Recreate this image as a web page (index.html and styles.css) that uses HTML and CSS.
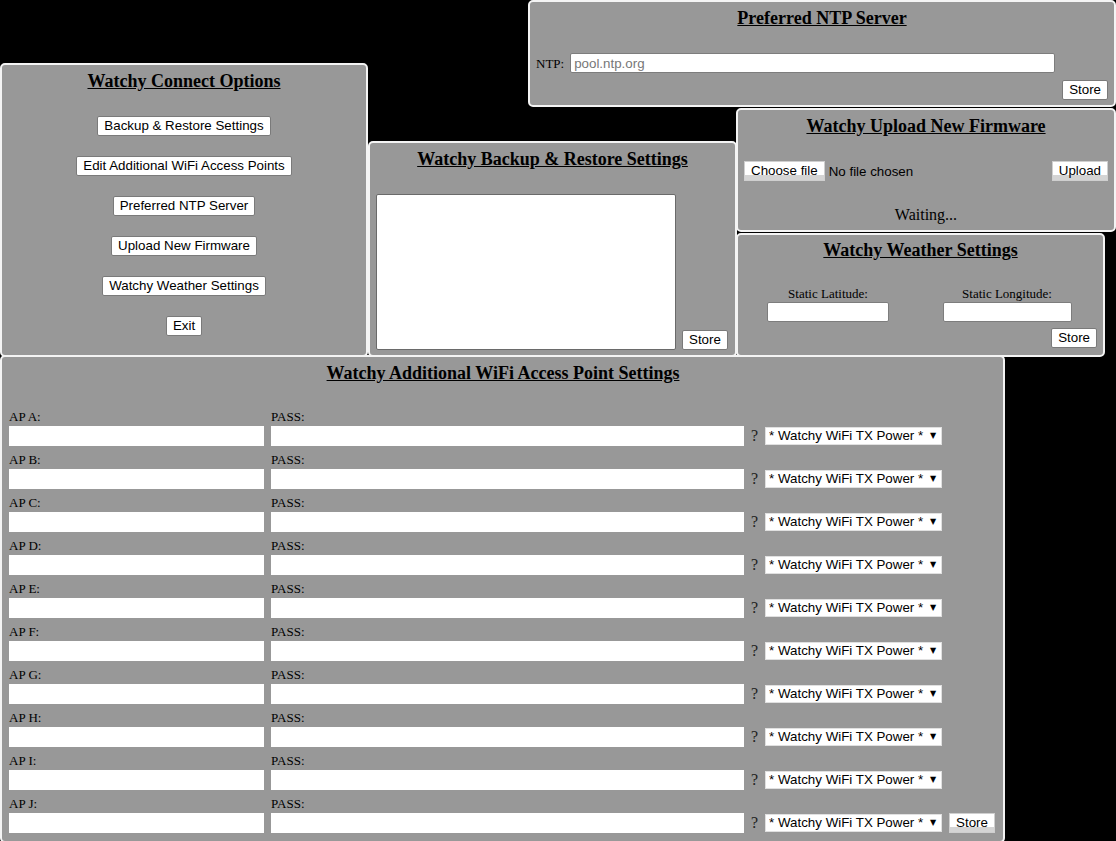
FILE: index.html
```html
<!DOCTYPE html>
<html lang="en">
<head>
<meta charset="utf-8">
<title>Watchy Connect</title>
<link rel="stylesheet" href="styles.css">
</head>
<body>
<div class="desk">

  <section class="win win-ntp">
    <h3 class="title">Preferred NTP Server</h3>
    <div class="ntp-row">
      <label class="lbl">NTP:</label>
      <input class="field field-bordered ntp-input" type="text" placeholder="pool.ntp.org">
    </div>
    <div class="end-row"><button class="btn">Store</button></div>
  </section>

  <section class="win win-connect">
    <h3 class="title">Watchy Connect Options</h3>
    <div class="menu">
      <button class="btn">Backup &amp; Restore Settings</button>
      <button class="btn">Edit Additional WiFi Access Points</button>
      <button class="btn">Preferred NTP Server</button>
      <button class="btn">Upload New Firmware</button>
      <button class="btn">Watchy Weather Settings</button>
      <button class="btn">Exit</button>
    </div>
  </section>

  <section class="win win-backup">
    <h3 class="title">Watchy Backup &amp; Restore Settings</h3>
    <div class="backup-row">
      <textarea class="backup-text"></textarea>
      <button class="btn">Store</button>
    </div>
  </section>

  <section class="win win-firmware">
    <h3 class="title">Watchy Upload New Firmware</h3>
    <div class="file-row">
      <span class="btn btn-soft">Choose file</span>
      <span class="file-name">No file chosen</span>
      <button class="btn btn-soft upload">Upload</button>
    </div>
    <div class="status">Waiting...</div>
  </section>

  <section class="win win-weather">
    <h3 class="title">Watchy Weather Settings</h3>
    <div class="coords">
      <div class="coord">
        <label class="lbl">Static Latitude:</label>
        <input class="field field-bordered lat" type="text">
      </div>
      <div class="coord">
        <label class="lbl">Static Longitude:</label>
        <input class="field field-bordered lon" type="text">
      </div>
    </div>
    <div class="end-row"><button class="btn">Store</button></div>
  </section>

  <section class="win win-wifi">
    <h3 class="title">Watchy Additional WiFi Access Point Settings</h3>
    <div class="ap-list">
      <div class="ap-row">
        <div class="ap-field ap-ssid"><label class="lbl">AP A:</label><input class="field" type="text"></div>
        <div class="ap-field ap-pass"><label class="lbl">PASS:</label><input class="field" type="text"></div>
        <span class="q">?</span>
        <span class="sel"><select class="power"><option>* Watchy WiFi TX Power *</option></select></span>
      </div>
      <div class="ap-row">
        <div class="ap-field ap-ssid"><label class="lbl">AP B:</label><input class="field" type="text"></div>
        <div class="ap-field ap-pass"><label class="lbl">PASS:</label><input class="field" type="text"></div>
        <span class="q">?</span>
        <span class="sel"><select class="power"><option>* Watchy WiFi TX Power *</option></select></span>
      </div>
      <div class="ap-row">
        <div class="ap-field ap-ssid"><label class="lbl">AP C:</label><input class="field" type="text"></div>
        <div class="ap-field ap-pass"><label class="lbl">PASS:</label><input class="field" type="text"></div>
        <span class="q">?</span>
        <span class="sel"><select class="power"><option>* Watchy WiFi TX Power *</option></select></span>
      </div>
      <div class="ap-row">
        <div class="ap-field ap-ssid"><label class="lbl">AP D:</label><input class="field" type="text"></div>
        <div class="ap-field ap-pass"><label class="lbl">PASS:</label><input class="field" type="text"></div>
        <span class="q">?</span>
        <span class="sel"><select class="power"><option>* Watchy WiFi TX Power *</option></select></span>
      </div>
      <div class="ap-row">
        <div class="ap-field ap-ssid"><label class="lbl">AP E:</label><input class="field" type="text"></div>
        <div class="ap-field ap-pass"><label class="lbl">PASS:</label><input class="field" type="text"></div>
        <span class="q">?</span>
        <span class="sel"><select class="power"><option>* Watchy WiFi TX Power *</option></select></span>
      </div>
      <div class="ap-row">
        <div class="ap-field ap-ssid"><label class="lbl">AP F:</label><input class="field" type="text"></div>
        <div class="ap-field ap-pass"><label class="lbl">PASS:</label><input class="field" type="text"></div>
        <span class="q">?</span>
        <span class="sel"><select class="power"><option>* Watchy WiFi TX Power *</option></select></span>
      </div>
      <div class="ap-row">
        <div class="ap-field ap-ssid"><label class="lbl">AP G:</label><input class="field" type="text"></div>
        <div class="ap-field ap-pass"><label class="lbl">PASS:</label><input class="field" type="text"></div>
        <span class="q">?</span>
        <span class="sel"><select class="power"><option>* Watchy WiFi TX Power *</option></select></span>
      </div>
      <div class="ap-row">
        <div class="ap-field ap-ssid"><label class="lbl">AP H:</label><input class="field" type="text"></div>
        <div class="ap-field ap-pass"><label class="lbl">PASS:</label><input class="field" type="text"></div>
        <span class="q">?</span>
        <span class="sel"><select class="power"><option>* Watchy WiFi TX Power *</option></select></span>
      </div>
      <div class="ap-row">
        <div class="ap-field ap-ssid"><label class="lbl">AP I:</label><input class="field" type="text"></div>
        <div class="ap-field ap-pass"><label class="lbl">PASS:</label><input class="field" type="text"></div>
        <span class="q">?</span>
        <span class="sel"><select class="power"><option>* Watchy WiFi TX Power *</option></select></span>
      </div>
      <div class="ap-row">
        <div class="ap-field ap-ssid"><label class="lbl">AP J:</label><input class="field" type="text"></div>
        <div class="ap-field ap-pass"><label class="lbl">PASS:</label><input class="field" type="text"></div>
        <span class="q">?</span>
        <span class="sel"><select class="power"><option>* Watchy WiFi TX Power *</option></select></span>
        <button class="btn btn-soft">Store</button>
      </div>
    </div>
  </section>

</div>
</body>
</html>
```

FILE: styles.css
```css
* { box-sizing: border-box; }

html, body {
  margin: 0;
  padding: 0;
  background: #000;
}

body {
  font-family: "Liberation Serif", "Times New Roman", serif;
  color: #000;
}

.desk {
  position: relative;
  width: 1116px;
  height: 841px;
  overflow: hidden;
  background: #000;
}

/* windows on the desktop */
.win {
  position: absolute;
  background: #989898;
  border: 2px solid #f4f4f4;
  border-radius: 5px;
  padding: 6px 6px 0 6px;
  display: flex;
  flex-direction: column;
}

.win-ntp      { left: 528px; top: 0;     width: 588px; height: 107px; }
.win-connect  { left: 0;     top: 63px;  width: 368px; height: 294px; }
.win-backup   { left: 368px; top: 141px; width: 369px; height: 216px; }
.win-firmware { left: 736px; top: 108px; width: 380px; height: 124px; }
.win-weather  { left: 736px; top: 233px; width: 369px; height: 124px; padding-top: 5px; }
.win-wifi     { left: 0;     top: 355px; width: 1005px; height: 488px; padding-left: 7px; }

.title {
  margin: 0;
  font-family: "Liberation Serif", "Times New Roman", serif;
  font-size: 18px;
  font-weight: bold;
  line-height: 21px;
  text-align: center;
  text-decoration: underline;
}

.lbl {
  font-family: "Liberation Serif", "Times New Roman", serif;
  font-size: 13px;
  line-height: 15px;
  color: #000;
}

/* controls */
.btn {
  display: inline-block;
  font-family: "Liberation Sans", Arial, sans-serif;
  font-size: 13.33px;
  line-height: 16px;
  height: 20px;
  padding: 1px 6px;
  color: #000;
  background: #fff;
  border: 1px solid #7a7a7a;
  border-radius: 2px;
  cursor: default;
}

.btn-soft {
  background: linear-gradient(#fff 0, #fff 70%, #d4d4d4 70%, #d4d4d4 100%);
  border: 1px solid #cfcfcf;
  border-radius: 0;
}

.field {
  height: 20px;
  margin: 0;
  padding: 1px 3px;
  font-family: "Liberation Sans", Arial, sans-serif;
  font-size: 13.33px;
  background: #fff;
  border: 1px solid #fff;
  border-radius: 0;
  outline: none;
}

.field-bordered {
  border: 1px solid #7d7d7d;
  border-radius: 2px;
}

.field::placeholder { color: #777; }

.end-row {
  display: flex;
  justify-content: flex-end;
}

/* NTP */
.ntp-row {
  display: flex;
  align-items: center;
  gap: 6px;
  margin-top: 24px;
}
.ntp-input { width: 485px; }
.win-ntp .end-row { margin-top: 7px; }

/* Connect options */
.menu {
  display: flex;
  flex-direction: column;
  align-items: center;
  gap: 20px;
  margin-top: 24px;
}

/* Backup */
.backup-row {
  display: flex;
  align-items: flex-end;
  gap: 6px;
  margin-top: 24px;
}
.backup-text {
  width: 300px;
  height: 156px;
  margin: 0;
  resize: none;
  background: #fff;
  border: 1px solid #6a6a6a;
  border-radius: 2px;
  outline: none;
}

/* Firmware */
.file-row {
  display: flex;
  align-items: center;
  margin-top: 24px;
}
.file-name {
  margin-left: 4px;
  font-family: "Liberation Sans", Arial, sans-serif;
  font-size: 13.33px;
}
.upload { margin-left: auto; }
.status {
  margin-top: 25px;
  text-align: center;
  font-size: 16px;
  line-height: 18px;
}

/* Weather */
.coords {
  display: grid;
  grid-template-columns: 168px 190px;
  margin-top: 25px;
}
.coord {
  display: flex;
  flex-direction: column;
  align-items: center;
  gap: 1px;
}
.lat { width: 122px; }
.lon { width: 129px; }
.win-weather .end-row { margin-top: 6px; }

/* WiFi access points */
.ap-list {
  display: flex;
  flex-direction: column;
  gap: 6px;
  margin-top: 25px;
}
.ap-row {
  display: flex;
  align-items: flex-end;
  gap: 7px;
}
.ap-field {
  display: flex;
  flex-direction: column;
  gap: 2px;
}
.ap-ssid { width: 255px; }
.ap-pass { width: 473px; }
.ap-field .field { width: 100%; }

.q {
  font-family: "Liberation Serif", "Times New Roman", serif;
  font-size: 16px;
  line-height: 20px;
  color: #222;
}

.sel {
  position: relative;
  display: inline-block;
  margin-bottom: 1px;
}
.sel::after {
  content: "\25BC";
  position: absolute;
  right: 6px;
  top: 4px;
  font-family: "DejaVu Sans", sans-serif;
  font-size: 8px;
  line-height: 10px;
  color: #000;
  pointer-events: none;
}
.power {
  -webkit-appearance: none;
  appearance: none;
  display: block;
  width: 177px;
  height: 18px;
  margin: 0;
  padding: 0 16px 0 3px;
  font-family: "Liberation Sans", Arial, sans-serif;
  font-size: 13.33px;
  line-height: 16px;
  color: #000;
  background: #fff;
  border: 1px solid #e0e0e0;
  border-radius: 0;
  outline: none;
}
```
